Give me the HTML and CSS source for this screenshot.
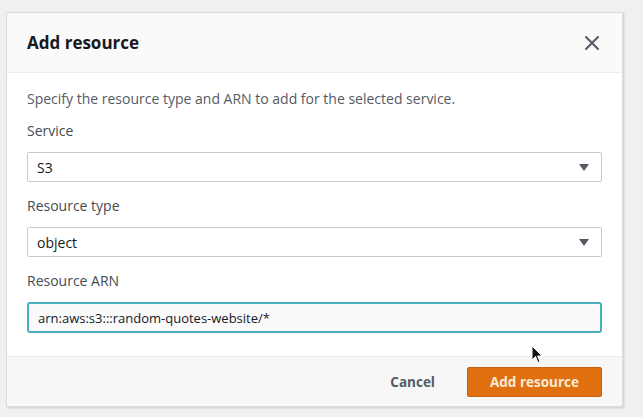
FILE: index.html
```html
<!DOCTYPE html>
<html lang="en">
<head>
<meta charset="utf-8">
<title>Add resource</title>
<link rel="stylesheet" href="styles.css">
</head>
<body>
<div class="modal">
  <div class="modal-header">
    <h2 class="modal-title">Add resource</h2>
    <button class="close-btn" aria-label="Close">
      <svg width="14" height="14" viewBox="0 0 14 14"><path d="M1 1 L13 13 M13 1 L1 13" stroke="#545b64" stroke-width="2" fill="none" stroke-linecap="round"/></svg>
    </button>
  </div>
  <div class="modal-body">
    <p class="desc">Specify the resource type and ARN to add for the selected service.</p>
    <div class="field">
      <label class="label">Service</label>
      <div class="select"><span>S3</span><span class="caret"></span></div>
    </div>
    <div class="field">
      <label class="label">Resource type</label>
      <div class="select"><span>object</span><span class="caret"></span></div>
    </div>
    <div class="field">
      <label class="label">Resource ARN</label>
      <div class="input focused">arn:aws:s3:::random-quotes-website/*</div>
    </div>
  </div>
  <div class="modal-footer">
    <button class="btn-link">Cancel</button>
    <button class="btn-primary">Add resource</button>
  </div>
  <svg class="cursor" width="12" height="19" viewBox="0 0 12 19"><path d="M1 1 L1 15 L4.5 11.5 L7 17.5 L9 16.6 L6.6 11 L11 11 Z" fill="#111" stroke="#fff" stroke-width="1" stroke-linejoin="round"/></svg>
</div>
</body>
</html>
```

FILE: styles.css
```css
* { box-sizing: border-box; }
html, body { margin: 0; padding: 0; }
body {
  background: #eff0f0;
  font-family: "Open Sans", "Noto Sans", sans-serif;
  color: #16191f;
  width: 643px;
  height: 417px;
  overflow: hidden;
  padding: 12px 20px 0 6px;
}
.modal {
  position: relative;
  width: 617px;
  background: #fff;
  border: 1px solid #dcdcdc;
  box-shadow: 1px 1px 2px rgba(0,0,0,0.15);
}
.modal-header {
  height: 60px;
  display: flex;
  align-items: center;
  justify-content: space-between;
  padding: 0 20px;
  background: #fafafa;
  border-bottom: 1px solid #eaeded;
}
.modal-title {
  margin: 0;
  font-size: 17px;
  font-weight: 700;
  color: #16191f;
}
.close-btn {
  border: 0;
  background: none;
  padding: 0;
  margin-right: 3px;
  width: 14px;
  height: 14px;
  display: flex;
}
.modal-body {
  padding: 16px 20px 23px;
}
.desc {
  margin: 0 0 12px;
  font-size: 14px;
  line-height: 20px;
  color: #545b64;
}
.field { margin-top: 14px; }
.field:first-of-type { margin-top: 0; }
.label {
  display: block;
  font-size: 14px;
  line-height: 20px;
  color: #444b52;
  margin-bottom: 11px;
}
.select {
  height: 30px;
  border: 1px solid #c6cccd;
  border-radius: 2px;
  display: flex;
  align-items: center;
  justify-content: space-between;
  padding: 0 12px 0 9px;
  font-size: 14px;
  color: #16191f;
}
.caret {
  width: 0;
  height: 0;
  border-left: 5.5px solid transparent;
  border-right: 5.5px solid transparent;
  border-top: 7px solid #545b64;
}
.input {
  height: 31px;
  border: 2px solid #4aaebe;
  border-radius: 3px;
  display: flex;
  align-items: center;
  padding: 0 9px;
  font-size: 13px;
  color: #16191f;
  background: #fafafa;
}
.modal-footer {
  height: 50px;
  display: flex;
  align-items: center;
  justify-content: flex-end;
  gap: 12px;
  padding: 0 20px;
  background: #f7f7f7;
  border-top: 1px solid #eaeded;
}
.btn-link {
  border: 0;
  background: none;
  font-family: inherit;
  font-size: 13.5px;
  font-weight: 700;
  color: #545b64;
  padding: 0 20px;
  height: 30px;
}
.btn-primary {
  height: 30px;
  width: 135px;
  border: 1px solid #c8600c;
  border-radius: 2px;
  background: #e07010;
  color: #fbead8;
  font-family: inherit;
  font-size: 13.5px;
  font-weight: 700;
}
.cursor {
  position: absolute;
  left: 524px;
  top: 332px;
}
```
